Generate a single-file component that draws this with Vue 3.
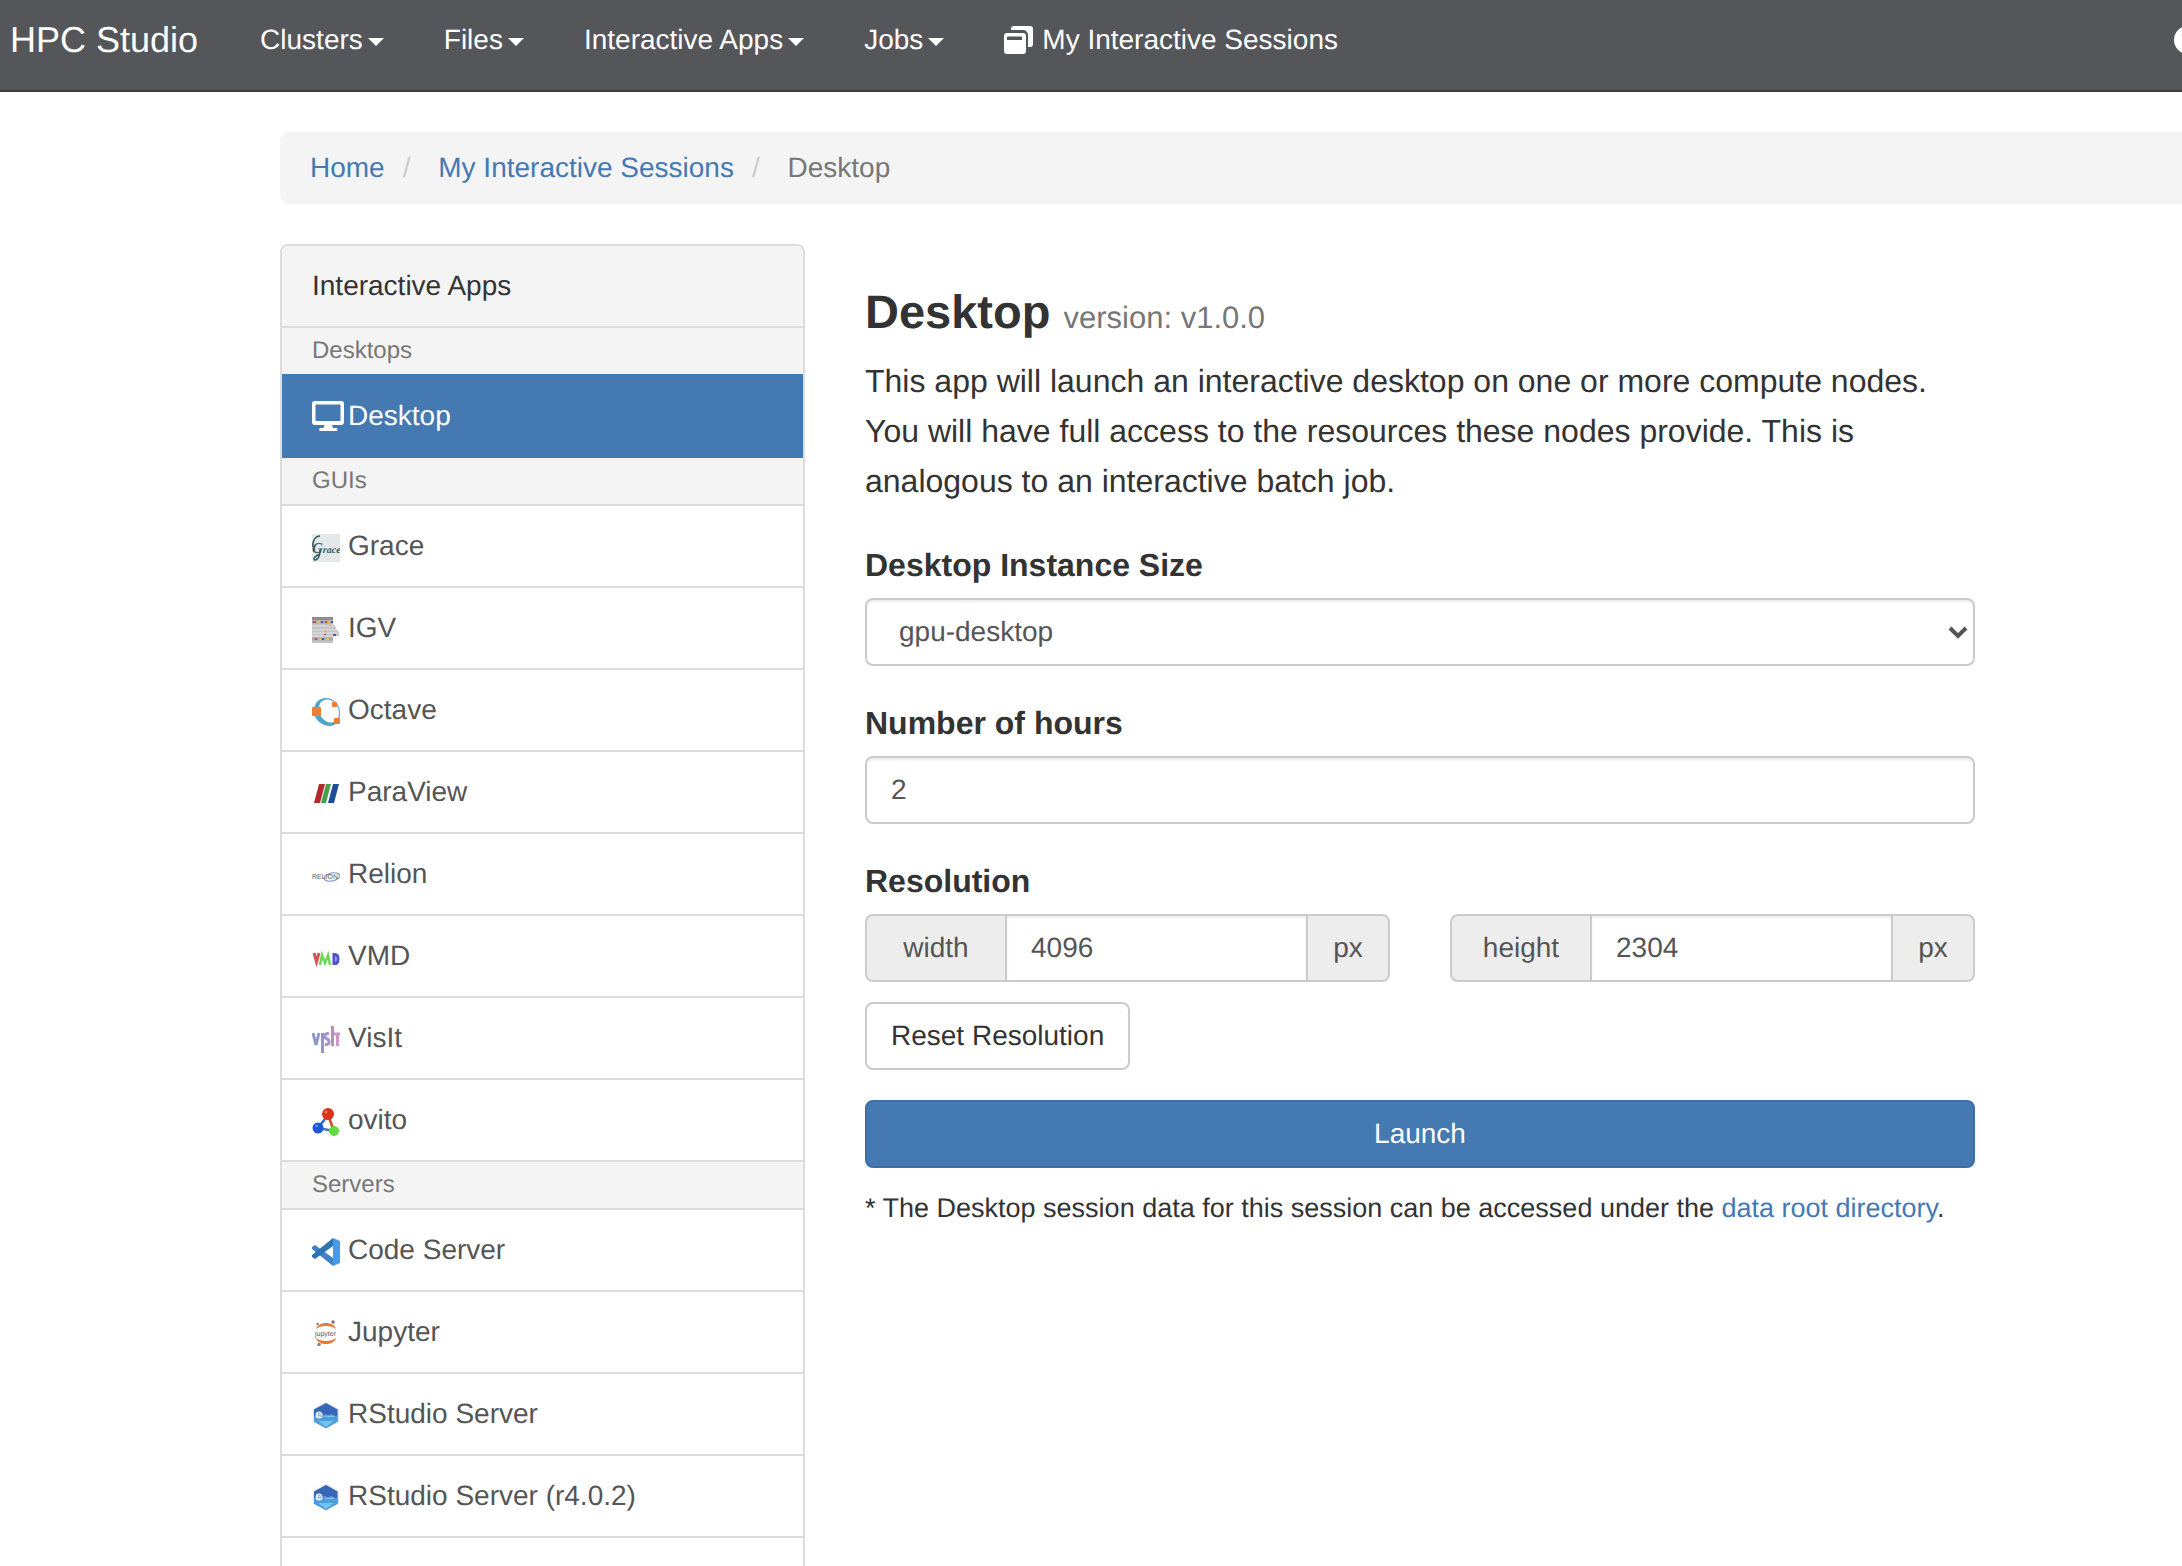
<script setup>
import { ref } from 'vue'

const menus = ['Clusters', 'Files', 'Interactive Apps', 'Jobs']

const groups = [
  { title: 'Desktops', items: [{ name: 'Desktop', icon: 'desktop', active: true }] },
  {
    title: 'GUIs',
    items: [
      { name: 'Grace', icon: 'grace' },
      { name: 'IGV', icon: 'igv' },
      { name: 'Octave', icon: 'octave' },
      { name: 'ParaView', icon: 'paraview' },
      { name: 'Relion', icon: 'relion' },
      { name: 'VMD', icon: 'vmd' },
      { name: 'VisIt', icon: 'visit' },
      { name: 'ovito', icon: 'ovito' },
    ],
  },
  {
    title: 'Servers',
    items: [
      { name: 'Code Server', icon: 'code' },
      { name: 'Jupyter', icon: 'jupyter' },
      { name: 'RStudio Server', icon: 'rstudio' },
      { name: 'RStudio Server (r4.0.2)', icon: 'rstudio' },
    ],
  },
]

const size = ref('gpu-desktop')
const hours = ref('2')
const width = ref('4096')
const height = ref('2304')

function resetResolution() {
  width.value = '4096'
  height.value = '2304'
}
</script>

<template>
  <div class="page">
    <header class="navbar">
      <a class="brand" href="#">HPC Studio</a>
      <nav class="nav">
        <a v-for="m in menus" :key="m" class="nav-link" href="#">{{ m }}<span class="caret"></span></a>
        <a class="nav-link" href="#">
          <svg class="nav-icon" width="30" height="28" viewBox="0 0 30 28" aria-hidden="true">
            <path fill="#fff" d="M10 0h16a3 3 0 0 1 3 3v15a3 3 0 0 1-3 3h-2V9a5 5 0 0 0-5-5H7V3a3 3 0 0 1 3-3z" />
            <path fill="#fff" fill-rule="evenodd" d="M3 7h16a3 3 0 0 1 3 3v15a3 3 0 0 1-3 3H3a3 3 0 0 1-3-3V10a3 3 0 0 1 3-3zm1 3.500a1 1 0 0 0-1 1V14h15v-2.500a1 1 0 0 0-1-1z" />
          </svg>
          My Interactive Sessions
        </a>
      </nav>
      <a class="help" href="#" aria-label="Help">
        <svg width="28" height="28" viewBox="0 0 28 28" aria-hidden="true">
          <circle cx="14" cy="14" r="14" fill="#fff" />
          <path d="M9 10c1-3 3-4 5-4 3 0 5 2 5 4 0 4-5 3-5 7" fill="none" stroke="#53565a" stroke-width="3" />
          <circle cx="14" cy="21" r="2" fill="#53565a" />
        </svg>
      </a>
    </header>

    <ol class="breadcrumb">
      <li><a href="#">Home</a></li>
      <li><a href="#">My Interactive Sessions</a></li>
      <li>Desktop</li>
    </ol>

    <main class="columns">
      <aside class="panel">
        <div class="panel-heading">Interactive Apps</div>
        <template v-for="g in groups" :key="g.title">
          <p class="group-title">{{ g.title }}</p>
          <a v-for="i in g.items" :key="i.name" class="app" :class="{ active: i.active }" href="#">
            <svg v-if="i.icon === 'desktop'" class="app-icon wide" viewBox="0 0 32 30" aria-hidden="true">
              <path fill="#fff" fill-rule="evenodd" d="M3 0h26a3 3 0 0 1 3 3v18a3 3 0 0 1-3 3h-9l1 3h3a1.500 1.500 0 0 1 0 3H8.500a1.500 1.500 0 0 1 0-3h3l1-3H3a3 3 0 0 1-3-3V3a3 3 0 0 1 3-3zm1 3.500a.5.5 0 0 0-.5.5v16h25V4a.5.5 0 0 0-.5-.5z" />
            </svg>
            <svg v-else class="app-icon" viewBox="0 0 28 28" aria-hidden="true">
              <template v-if="i.icon === 'grace'">
                <rect width="28" height="28" fill="#e5e8e8" />
                <text x="0" y="19" font-family="Liberation Serif, serif" font-style="italic" font-weight="700" font-size="15" fill="#2f5c5e">G<tspan font-size="10">race</tspan></text>
                <path d="M8 2C3 2 0 8 1 13M8 17c0 6-3 9-5 9s-1-4 5-6" fill="none" stroke="#2f5c5e" stroke-width="1.500" />
              </template>
              <template v-else-if="i.icon === 'igv'">
                <path d="M0 1h21v8h2l1 4 3 3v4h-6v7H0z" fill="#c5c5c5" />
                <rect y="1" width="21" height="3" fill="#8d8d8d" />
                <path d="M0 6h21M0 23h21" stroke="#aaa5ae" stroke-width="3" />
                <path d="M1 6h3M13 6h2M12 19h2M3 23h2" stroke="#cf4a4a" stroke-width="2" />
                <path d="M5 6h3M16 6h2M7 23h2M14 23h3" stroke="#dcc84e" stroke-width="2" />
                <path d="M9 6h2M19 6h2M10 23h2M21 19h3" stroke="#4a58b4" stroke-width="2" />
                <path d="M0 10h22M0 14h24M0 17h26M0 20h21" stroke="#e2e2e2" stroke-width="1" />
                <path d="M13 14l2 4M17 9l2 1" stroke="#e6a09c" stroke-width="1" />
              </template>
              <template v-else-if="i.icon === 'octave'">
                <path fill="#4da5cd" fill-rule="evenodd" d="M14 0c8 0 14 7 14 15s-4 13-10 13C9 28 2 21 2 13 2 5 7 0 14 0zm1 1.500C10 1.500 7 5 7 11c0 8 6 13.500 12 13.500 5 0 8-4 8-9.500 0-7-5-13.500-12-13.500z" />
                <rect y="9" width="9" height="9" rx="1" fill="#ee7d36" />
                <rect x="20" y="4" width="5" height="5" rx="1" fill="#ee7d36" />
                <rect x="22" y="20" width="6" height="6" rx="1" fill="#ee7d36" />
              </template>
              <template v-else-if="i.icon === 'paraview'">
                <path d="M7 4h6L8 23H2z" fill="#b3282d" />
                <path d="M14 4h5l-5 19H9z" fill="#48a04e" />
                <path d="M21 4h6l-5 19h-6z" fill="#1f4e94" />
              </template>
              <template v-else-if="i.icon === 'relion'">
                <ellipse cx="20" cy="15" rx="8" ry="4" transform="rotate(-12 20 15)" fill="none" stroke="#8a9dcb" stroke-width="1.200" />
                <text x="0" y="17" font-family="Liberation Sans, sans-serif" font-size="7" fill="#5b5b60">RELION</text>
              </template>
              <template v-else-if="i.icon === 'vmd'">
                <path d="M2 9l2.500 9L7 9" fill="none" stroke="#d25555" stroke-width="3" />
                <path d="M8 21l2-10 3 8 3-8 2 10" fill="none" stroke="#6cd95a" stroke-width="2.500" />
                <path d="M22 10.500v9h1c4 0 4-9 0-9z" fill="none" stroke="#4f4fd2" stroke-width="3" />
              </template>
              <template v-else-if="i.icon === 'visit'">
                <path d="M1 7l3 12 3-12M10.500 7v20" fill="none" stroke="#9494cc" stroke-width="3" />
                <path d="M17 8c-5-2-5 4-2 5s3 7-2 5" fill="none" stroke="#a792c6" stroke-width="3" />
                <path d="M20.500 0v20" fill="none" stroke="#bb8cc4" stroke-width="3" />
                <path d="M22 8h6M25.500 8v12" fill="none" stroke="#cf96c4" stroke-width="3" />
              </template>
              <template v-else-if="i.icon === 'ovito'">
                <path d="M16 7L6 20" stroke="#3565c4" stroke-width="2.500" />
                <path d="M16 7l6 16" stroke="#cc4a28" stroke-width="2.500" />
                <path d="M6 20l16 3" stroke="#3c7cb0" stroke-width="2.500" />
                <circle cx="16" cy="6" r="6" fill="#da321b" />
                <circle cx="6" cy="20" r="5.500" fill="#1f58d6" />
                <circle cx="22" cy="23" r="5" fill="#5fdc3a" />
                <circle cx="14" cy="4" r="1.500" fill="#f27a64" />
                <circle cx="4.500" cy="18" r="1.300" fill="#6c98ee" />
              </template>
              <template v-else-if="i.icon === 'code'">
                <path d="M0 9l3-2L21 20v8L0 11z" fill="#3f83c6" />
                <path d="M0 19l3 2L21 8V0L0 17z" fill="#2f73b5" />
                <path d="M21 0l7 3v22l-7 3z" fill="#479ae8" />
              </template>
              <template v-else-if="i.icon === 'jupyter'">
                <path d="M4 9c2-8 18-8 20 0-5-4-15-4-20 0z" fill="#e57c38" />
                <path d="M4 18c2 8 18 8 20 0-5 4-15 4-20 0z" fill="#e57c38" />
                <circle cx="5.500" cy="4" r="1.200" fill="#777" />
                <circle cx="21" cy="2" r="1.700" fill="#777" />
                <circle cx="7" cy="24.500" r="1.800" fill="#888" />
                <text x="3" y="15.500" font-family="Liberation Sans, sans-serif" font-size="7" fill="#555">jupyter</text>
              </template>
              <template v-else>
                <path d="M14 0l13 7v13l-13 7-13-7V7z" fill="#dfe3ea" />
                <path d="M14 1l11.500 6.500v12L14 26 2 19.500v-12z" fill="#3566b8" />
                <path d="M2 14h23.500v5.500L14 26 2 19.500z" fill="#4c9ddb" />
                <path d="M6 19h16l-8 6z" fill="#6fc3ee" />
                <circle cx="7" cy="13" r="3.500" fill="#eef4fb" />
                <text x="5.500" y="15" font-family="Liberation Sans, sans-serif" font-size="5" fill="#3566b8">R</text>
                <text x="11" y="15" font-family="Liberation Sans, sans-serif" font-size="4" fill="#cfe2f6">Studio</text>
              </template>
            </svg>
            {{ i.name }}
          </a>
        </template>
      </aside>

      <section class="content">
        <h3 class="title">Desktop <small>version: v1.0.0</small></h3>
        <p class="lead">
          This app will launch an interactive desktop on one or more compute nodes.
          You will have full access to the resources these nodes provide. This is
          analogous to an interactive batch job.
        </p>

        <form @submit.prevent>
          <div class="field">
            <label class="label" for="size">Desktop Instance Size</label>
            <div class="select-wrap">
              <select id="size" v-model="size" class="control select">
                <option>gpu-desktop</option>
              </select>
              <svg class="chevron" width="20" height="14" viewBox="0 0 20 14" aria-hidden="true">
                <path d="M2 2l8 8 8-8" fill="none" stroke="#555" stroke-width="4" />
              </svg>
            </div>
          </div>

          <div class="field">
            <label class="label" for="hours">Number of hours</label>
            <input id="hours" v-model="hours" class="control" type="text" inputmode="numeric" />
          </div>

          <div class="resolution" role="group" aria-labelledby="resolution">
            <span id="resolution" class="label">Resolution</span>
            <div class="pair">
              <div class="input-group">
                <label class="addon" for="width">width</label>
                <input id="width" v-model="width" class="control" type="text" inputmode="numeric" />
                <span class="addon unit">px</span>
              </div>
              <div class="input-group">
                <label class="addon" for="height">height</label>
                <input id="height" v-model="height" class="control" type="text" inputmode="numeric" />
                <span class="addon unit">px</span>
              </div>
            </div>
            <button class="btn" type="button" @click="resetResolution">Reset Resolution</button>
          </div>

          <button class="btn primary" type="submit">Launch</button>
        </form>

        <p class="note">
          * The Desktop session data for this session can be accessed under the
          <a href="#">data root directory</a>.
        </p>
      </section>
    </main>
  </div>
</template>

<style>
body {
  margin: 0;
  background: #fff;
}
</style>

<style scoped>
.page {
  display: flex;
  flex-direction: column;
  min-height: 100vh;
  overflow: hidden;
  font-family: "Helvetica Neue", "Liberation Sans", Arial, sans-serif;
  font-size: 28px;
  line-height: 40px;
  text-rendering: geometricPrecision;
  color: #333;
}
.page *,
.page {
  box-sizing: border-box;
}
a {
  color: #4479b2;
  text-decoration: none;
}

.navbar {
  display: flex;
  height: 92px;
  padding: 20px 0 0 10px;
  background: #55565a;
  border-bottom: 2px solid #3b3b3e;
}
.brand {
  font-size: 36px;
  color: #fff;
  white-space: nowrap;
}
.nav {
  display: flex;
  flex: 1;
  gap: 60px;
  padding-left: 62px;
}
.nav-link {
  display: flex;
  align-items: center;
  height: 40px;
  color: #fff;
  white-space: nowrap;
}
.caret {
  margin: 4px 0 0 5px;
  border: 8px solid transparent;
  border-top-color: #fff;
  border-bottom: 0;
}
.nav-icon {
  margin-right: 8px;
}
.help {
  display: flex;
  align-items: center;
  height: 40px;
  margin-right: -20px;
}

.breadcrumb {
  display: flex;
  margin: 40px 0 40px 280px;
  padding: 16px 30px;
  border-radius: 8px 0 0 8px;
  background: #f4f4f4;
  color: #777;
  list-style: none;
}
.breadcrumb li + li::before {
  content: "/\00a0";
  padding: 0 20px 0 18px;
  color: #ccc;
}

.columns {
  display: grid;
  flex: 1;
  grid-template-columns: 525fr 1110fr;
  gap: 60px;
  padding: 0 207px 0 280px;
}

.panel {
  border: 2px solid #dcdcdc;
  border-bottom: 0;
  border-radius: 8px 8px 0 0;
}
.panel-heading {
  padding: 20px 30px;
  border-bottom: 2px solid #dcdcdc;
  border-radius: 6px 6px 0 0;
  background: #f4f4f4;
}
.group-title {
  margin: 0;
  padding: 6px 30px;
  background: #f4f4f4;
  font-size: 24px;
  line-height: 34px;
  color: #777;
}
.app {
  display: flex;
  align-items: center;
  padding: 20px 30px;
  border-bottom: 2px solid #dcdcdc;
  color: #555;
}
.group-title + .app {
  border-top: 2px solid #dcdcdc;
}
.group-title + .app.active {
  border-color: #4479b2;
  background: #4479b2;
  color: #fff;
}
.app-icon {
  flex: none;
  width: 28px;
  height: 28px;
  margin: 4px 8px 0 0;
}
.app-icon.wide {
  width: 32px;
  height: 30px;
  margin: 0 4px 0 0;
}

.content {
  padding-top: 42px;
}
.title {
  margin: 0 0 12px;
  font-size: 47px;
  line-height: 52px;
  font-weight: 700;
}
.title small {
  font-size: 31px;
  font-weight: 400;
  color: #777;
}
.lead {
  margin: 0 0 36px;
  font-size: 32px;
  line-height: 50px;
}
.field {
  margin-bottom: 34px;
}
.label {
  display: block;
  margin-bottom: 10px;
  font-size: 32px;
  line-height: 46px;
  font-weight: 700;
}
.control {
  display: block;
  width: 100%;
  height: 68px;
  padding: 0 24px;
  border: 2px solid #cbcbcb;
  border-radius: 8px;
  background: #fff;
  box-shadow: inset 0 2px 2px rgba(0, 0, 0, 0.075);
  font: inherit;
  text-rendering: inherit;
  color: #555;
}
.select-wrap {
  position: relative;
}
.select {
  padding: 0 48px 0 32px;
  appearance: none;
}
.chevron {
  position: absolute;
  top: 28px;
  right: 7px;
  pointer-events: none;
}
.pair {
  display: grid;
  grid-template-columns: 1fr 1fr;
  gap: 60px;
  margin-bottom: 20px;
}
.input-group {
  display: flex;
}
.input-group .control {
  flex: 1;
  min-width: 0;
  border-radius: 0;
}
.addon {
  flex: none;
  width: 140px;
  height: 68px;
  padding: 12px 0;
  border: 2px solid #cbcbcb;
  border-right: 0;
  border-radius: 8px 0 0 8px;
  background: #ededed;
  text-align: center;
  color: #555;
}
.addon.unit {
  width: 82px;
  border-right: 2px solid #cbcbcb;
  border-left: 0;
  border-radius: 0 8px 8px 0;
}
.btn {
  height: 68px;
  padding: 0 24px;
  border: 2px solid #cbcbcb;
  border-radius: 8px;
  background: #fff;
  font: inherit;
  text-rendering: inherit;
  color: #333;
}
.btn.primary {
  display: block;
  width: 100%;
  margin: 30px 0 20px;
  border-color: #3e6ea4;
  background: #4479b2;
  color: #fff;
}
.note {
  margin: 0;
  font-size: 27px;
}
</style>
